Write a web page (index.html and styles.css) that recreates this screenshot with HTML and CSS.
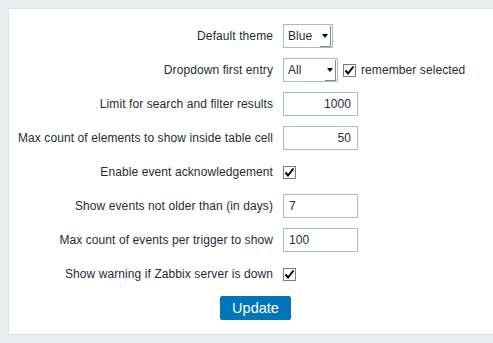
FILE: index.html
```html
<!DOCTYPE html>
<html lang="en">
<head>
    <meta charset="UTF-8">
    <meta name="viewport" content="width=device-width, initial-scale=1.0">
    <title>User profile</title>
    <link rel="stylesheet" href="styles.css">
</head>
<body>

    <div class="panel">
        <form class="form-list">
            <label class="label">Default theme</label>
            <div class="field">
                <div class="select select-theme"><span>Blue</span><span class="arrow"></span></div>
            </div>

            <label class="label">Dropdown first entry</label>
            <div class="field">
                <div class="select select-entry"><span>All</span><span class="arrow"></span></div>
                <span class="check"><svg width="11" height="11" viewBox="0 0 11 11"><polyline points="1.5,5.5 4,8.5 9.5,1.5" fill="none" stroke="#000" stroke-width="2"/></svg></span>
                <span>remember selected</span>
            </div>

            <label class="label">Limit for search and filter results</label>
            <div class="field">
                <div class="input num">1000</div>
            </div>

            <label class="label">Max count of elements to show inside table cell</label>
            <div class="field">
                <div class="input num">50</div>
            </div>

            <label class="label">Enable event acknowledgement</label>
            <div class="field">
                <span class="check"><svg width="11" height="11" viewBox="0 0 11 11"><polyline points="1.5,5.5 4,8.5 9.5,1.5" fill="none" stroke="#000" stroke-width="2"/></svg></span>
            </div>

            <label class="label">Show events not older than (in days)</label>
            <div class="field">
                <div class="input">7</div>
            </div>

            <label class="label">Max count of events per trigger to show</label>
            <div class="field">
                <div class="input">100</div>
            </div>

            <label class="label">Show warning if Zabbix server is down</label>
            <div class="field">
                <span class="check"><svg width="11" height="11" viewBox="0 0 11 11"><polyline points="1.5,5.5 4,8.5 9.5,1.5" fill="none" stroke="#000" stroke-width="2"/></svg></span>
            </div>

            <div class="buttons">
                <button type="button" class="btn">Update</button>
            </div>
        </form>
    </div>

</body>
</html>
```

FILE: styles.css
```css
body {
    margin: 8px 0 8px 8px;
    background: #ebeef0;
    font-family: "Liberation Sans", Arial, sans-serif;
    font-size: 12px;
    letter-spacing: 0.09px;
    color: #1f2c33;
    overflow: hidden;
}
.panel {
    background: #fff;
    border: 1px solid #dfe4e7;
    border-right: none;
    padding: 15px 0 14px;
}
.form-list {
    display: grid;
    grid-template-columns: 264px auto;
    grid-auto-rows: 24px;
    column-gap: 10px;
    row-gap: 10px;
    align-items: center;
}
.label {
    text-align: right;
    white-space: nowrap;
}
.field {
    display: flex;
    align-items: center;
    gap: 5px;
    height: 24px;
}
.select {
    box-sizing: border-box;
    height: 24px;
    border: 1px solid #acbbc2;
    display: flex;
    align-items: center;
    justify-content: space-between;
    padding: 0 0 0 4px;
    background: #fff;
}
.select-theme {
    width: 50px;
}
.select-entry {
    width: 55px;
}
.select .arrow {
    position: relative;
    width: 11px;
    height: 21px;
    margin-right: 1px;
    border-right: 1px solid #8a8a8a;
    border-bottom: 1px solid #8a8a8a;
    box-sizing: border-box;
}
.select .arrow::after {
    content: "";
    position: absolute;
    left: 2px;
    top: 8px;
    border-left: 3px solid transparent;
    border-right: 3px solid transparent;
    border-top: 4px solid #000;
}
.input {
    box-sizing: border-box;
    width: 75px;
    height: 24px;
    border: 1px solid #acbbc2;
    padding: 0 5px;
    line-height: 22px;
}
.num {
    text-align: right;
    padding-right: 6px;
}
.check {
    box-sizing: border-box;
    width: 13px;
    height: 13px;
    border: 1px solid #7b7b7b;
    background: #fff;
    display: flex;
    align-items: center;
    justify-content: center;
}
.check svg {
    display: block;
}
.buttons {
    grid-column: 1 / -1;
}
.btn {
    margin-left: 211px;
    width: 71px;
    height: 24px;
    background: #0275b8;
    border: 1px solid #0275b8;
    border-radius: 2px;
    color: #fff;
    font-family: "Liberation Sans", Arial, sans-serif;
    font-size: 14.5px;
    padding: 0;
    cursor: pointer;
}
```
